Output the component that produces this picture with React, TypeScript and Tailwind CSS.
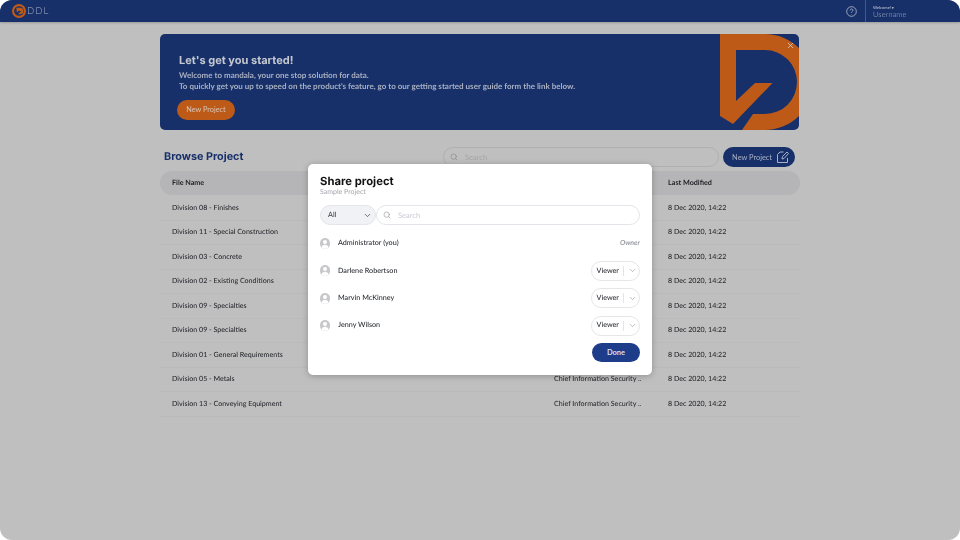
import React from "react";
import { ChevronDown, Search, X } from "lucide-react";

const rows = [
  "Division 08 - Finishes",
  "Division 11 - Special Construction",
  "Division 03 - Concrete",
  "Division 02 - Existing Conditions",
  "Division 09 - Specialties",
  "Division 09 - Specialties",
  "Division 01 - General Requirements",
  "Division 05 - Metals",
  "Division 13 - Conveying Equipment",
];

function Avatar() {
  return (
    <span className="flex h-[11px] w-[10px] items-center justify-center overflow-hidden rounded-full bg-[#c8c8cb]">
      <svg viewBox="0 0 20 22" className="h-[11px] w-[10px]" aria-hidden>
        <circle cx="10" cy="8" r="4" fill="#fff" />
        <path d="M3 19c.6-4 3.400-5.500 7-5.500s6.400 1.500 7 5.500a10 11 0 0 1-14 0z" fill="#fff" />
      </svg>
    </span>
  );
}

function PersonRow({ name }: { name: string }) {
  return (
    <div className="flex h-[27.300px] items-center justify-between">
      <div className="flex items-center">
        <Avatar />
        <span className="ml-[8px] text-[7.200px] font-medium text-[#2a2d33]">{name}</span>
      </div>
      <div className="flex h-[20px] w-[49px] items-center rounded-full border border-[#e6e6e9] pl-[4.500px] text-[7.200px] font-medium text-[#2a2d33]">
        <span className="w-[26px]">Viewer</span>
        <span className="h-[10px] w-px bg-[#e4e4e6]" />
        <ChevronDown className="ml-[4px] h-[9px] w-[9px] text-[#8a8d94]" strokeWidth={1.5} />
      </div>
    </div>
  );
}

export default function App() {
  return (
    <div className="relative h-[540px] w-[960px] overflow-hidden rounded-[12px] bg-[#bfbfbf] font-['Lato',sans-serif] antialiased opacity-[0.999] [text-rendering:geometricPrecision]">
      <header className="flex h-[22px] items-center bg-[#17306a] shadow-[0_1px_2px_rgba(0,0,0,0.2)]">
        <div className="ml-[12px] flex items-center gap-[1px]">
          <svg width="14" height="14" viewBox="0 0 13 13" aria-hidden>
            <circle cx="6.500" cy="6.500" r="5.500" fill="none" stroke="#bd5a18" strokeWidth="2" />
            <path d="M4 3.500h3.500a3 3 0 0 1 0 6H5.500l3-3H6L4.500 8z" fill="#bd5a18" />
          </svg>
          <span className="mt-[2px] text-[9.500px] font-light tracking-[1px] text-[#a9b1c4]">DDL</span>
        </div>
        <div className="ml-auto flex h-full items-center">
          <svg width="11" height="11" viewBox="0 0 24 24" fill="none" stroke="#a9b1c4" strokeWidth="2" aria-hidden>
            <circle cx="12" cy="12" r="10.500" />
            <path d="M9 9.500a3 3 0 1 1 4.500 2.600c-1 .6-1.500 1.200-1.500 2.400M12 17.500v.5" />
          </svg>
          <div className="ml-[8px] h-full w-px bg-[#465987]" />
          <div className="ml-[7px] mr-[55px] mt-[2px] w-[32px] leading-none text-[#a9b1c4]">
            <div className="text-[4px] font-bold">Welcome! ▾</div>
            <div className="mt-[1px] text-[7.500px] font-light tracking-[0.1px]">Username</div>
          </div>
        </div>
      </header>

      <main className="mx-auto w-[640px] pt-[12px]">
        <section className="relative flex h-[96px] w-[639px] flex-col items-start overflow-hidden rounded-[5px] bg-[#17306a] pl-[19px] pt-[18px]">
          <h1 className="font-['Inter',sans-serif] text-[11px] font-bold leading-[16px] text-[#c4c8d0]">Let's get you started!</h1>
          <p className="mt-[2px] text-[8px] font-bold leading-[11px] text-[#a8afc0]">
            Welcome to mandala, your one stop solution for data.
            <br />
            To quickly get you up to speed on the product's feature, go to our getting started user guide form the link below.
          </p>
          <button className="ml-[-2px] mt-[8px] flex h-[20px] w-[58px] items-center justify-center rounded-full bg-[#bd5a18] text-[7.300px] text-[#d8c6b8]">New Project</button>
          <svg viewBox="0 0 79 96" className="absolute right-0 top-0 h-[96px] w-[79px]" aria-hidden>
            <path d="M0 0H45A48 48 0 0 1 45 96H22L33 80H45A32 32 0 0 0 45 16H16V67L35 49H52.500L13 90L0 82Z" fill="#bd5a18" />
          </svg>
          <X className="absolute right-[4px] top-[6.500px] h-[9px] w-[9px] text-[#d5d7dc]" strokeWidth={2} />
        </section>

        <div className="mt-[16px] flex h-[22px] items-center">
          <h2 className="ml-[4px] w-[80px] whitespace-nowrap font-['Inter',sans-serif] text-[10.800px] font-bold text-[#17306a]">Browse Project</h2>
          <div className="ml-[199px] flex h-[20px] w-[276px] items-center rounded-full border border-[#b0b0b0] pl-[6px] text-[7.500px] text-[#a6a6a6]">
            <Search className="h-[8px] w-[8px] text-[#8a8a8a]" />
            <span className="ml-[7px] mt-[1px]">Search</span>
          </div>
          <button className="ml-[4px] flex h-[20px] w-[72px] items-center justify-end gap-[4px] rounded-full bg-[#17306a] pr-[5px] text-[7.400px] text-[#a9b1c4]">
            <span className="mt-[1px]">New Project</span>
            <svg width="14" height="14" viewBox="0 0 14 14" fill="none" stroke="#a9b1c4" strokeWidth="1" aria-hidden>
              <path d="M7.500 2H4L1.500 4.500V12.500H11.500V8" />
              <path d="M6 9l.5-2.500L11 2l1.500 1.500L8 8.500z" />
            </svg>
          </button>
        </div>

        <div className="mt-[3px] flex h-[24px] w-[640px] items-center rounded-full bg-[#b5b5b7] pl-[12px] text-[7.200px] font-bold text-[#24252a]">
          <span className="w-[496px]">File Name</span>
          <span>Last Modified</span>
        </div>

        <ul className="pt-[1px]">
          {rows.map((name, i) => (
            <li key={i} className="flex h-[24.500px] items-center border-b border-[#bababa] pl-[12px] pt-[1px] text-[7.100px] font-medium text-[#2a2b30]">
              <span className="w-[382px]">{name}</span>
              <span className="w-[114px]">Chief Information Security ..</span>
              <span>8 Dec 2020, 14:22</span>
            </li>
          ))}
        </ul>
      </main>

      <div className="absolute left-[308px] top-[164px] h-[211px] w-[344px] rounded-[5px] bg-white px-[12px] pt-[10px] shadow-[0_1px_6px_rgba(0,0,0,0.25)]">
        <h3 className="font-['Inter',sans-serif] text-[11.300px] font-bold leading-[14px] text-[#111]">Share project</h3>
        <div className="text-[7px] leading-[9px] text-[#a5a7ad]">Sample Project</div>
        <div className="mt-[8px] flex h-5 items-center">
          <div className="flex h-5 w-[56px] items-center justify-between rounded-full border border-[#e4e5ea] bg-[#f1f2f6] pl-[7px] pr-[3px] text-[7.200px] font-medium text-[#44464c]">
            All
            <ChevronDown className="h-[9px] w-[9px] text-[#444]" strokeWidth={2} />
          </div>
          <div className="flex h-5 w-[264px] items-center rounded-full border border-[#e4e5ea] pl-[6px] text-[7.500px] text-[#c9cad0]">
            <Search className="h-[8px] w-[8px] text-[#9a9ca3]" />
            <span className="ml-[7px] mt-[1px]">Search</span>
          </div>
        </div>
        <div className="mt-[5px] flex h-[27.300px] items-center justify-between">
          <div className="flex items-center">
            <Avatar />
            <span className="ml-[8px] text-[7.200px] font-medium text-[#2a2d33]">Administrator (you)</span>
          </div>
          <span className="text-[7px] font-bold italic text-[#9a9ca3]">Owner</span>
        </div>
        <PersonRow name="Darlene Robertson" />
        <PersonRow name="Marvin McKinney" />
        <PersonRow name="Jenny Wilson" />
        <div className="mt-[3.500px] flex justify-end">
          <button className="h-[19.500px] w-[48px] rounded-full bg-[#1d3c8a] pt-[1px] text-[7.500px] font-bold text-[#d9deea]">Done</button>
        </div>
      </div>
    </div>
  );
}
